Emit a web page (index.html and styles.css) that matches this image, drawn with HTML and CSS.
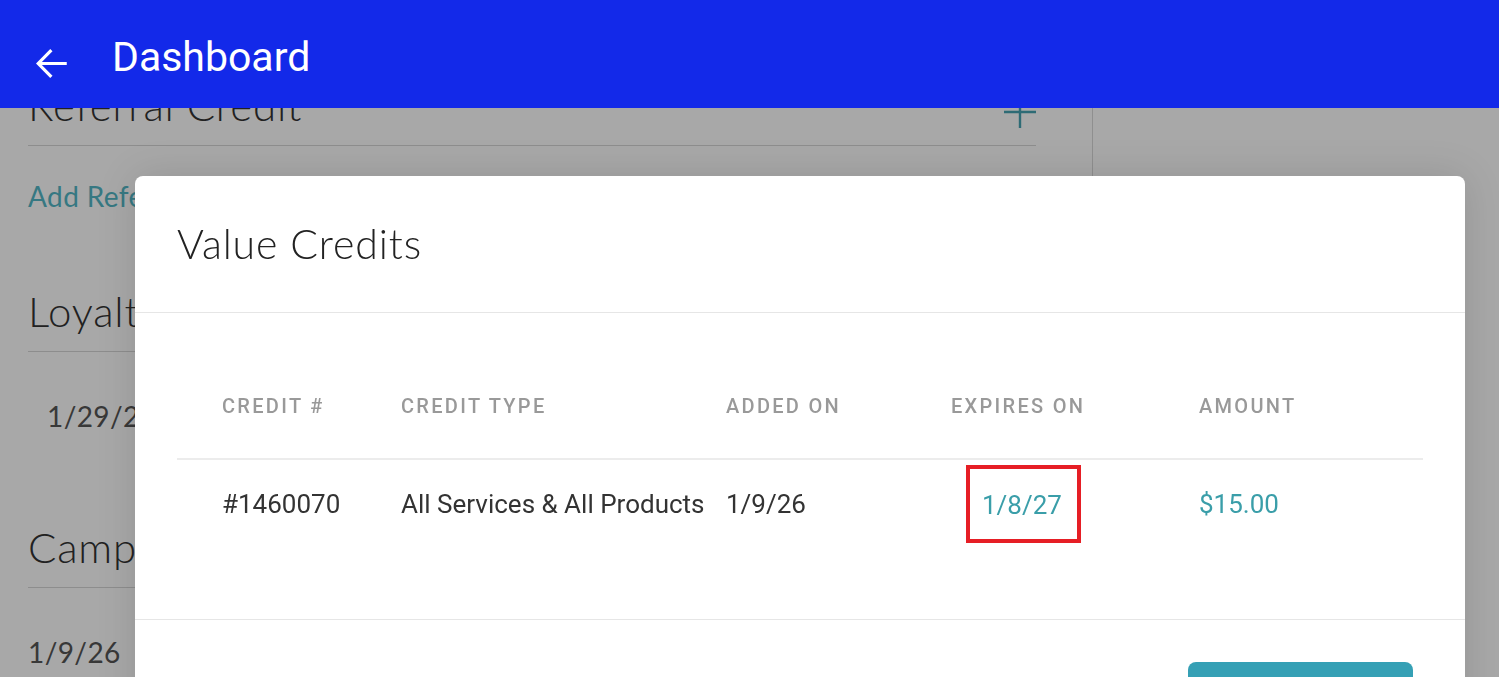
FILE: index.html
```html
<!DOCTYPE html>
<html lang="en">
<head>
    <meta charset="UTF-8">
    <title>Dashboard</title>
    <link rel="stylesheet" href="styles.css">
</head>
<body>
<div class="topbar">
    <svg class="back" width="45" height="45" viewBox="0 0 24 24">
        <path d="M19.6 12H4.6M11.4 4.9L4.4 12l7 7.1" fill="none" stroke="#fff" stroke-width="1.7"/>
    </svg>
    <span class="topbar-title">Dashboard</span>
</div>

<div class="page">
    <div class="main">
        <div class="section-head">
            <h2>Referral Credit</h2>
            <svg class="plus" width="32" height="32" viewBox="0 0 32 32">
                <path d="M0 16H32M16 0V32" stroke="#46a3b2" stroke-width="2.4"/>
            </svg>
        </div>
        <a class="link" href="#">Add Referral</a>

        <div class="section-head">
            <h2>Loyalty Points</h2>
        </div>
        <div class="row-date indent">1/29/26</div>

        <div class="section-head">
            <h2>Campaigns</h2>
        </div>
        <div class="row-date">1/9/26</div>
    </div>
    <div class="side"></div>
</div>

<div class="overlay"></div>

<div class="modal">
    <div class="modal-header">
        <h3>Value Credits</h3>
    </div>
    <div class="modal-body">
        <table class="credits">
            <colgroup>
                <col style="width:179px">
                <col style="width:325px">
                <col style="width:225px">
                <col style="width:248px">
                <col>
            </colgroup>
            <thead>
            <tr>
                <th>Credit #</th>
                <th>Credit Type</th>
                <th>Added On</th>
                <th>Expires On</th>
                <th>Amount</th>
            </tr>
            </thead>
            <tbody>
            <tr>
                <td>#1460070</td>
                <td>All Services &amp; All Products</td>
                <td>1/9/26</td>
                <td><span class="mark">1/8/27</span></td>
                <td class="teal">$15.00</td>
            </tr>
            </tbody>
        </table>
    </div>
    <div class="modal-footer">
        <button class="btn">Close</button>
    </div>
</div>
</body>
</html>
```

FILE: styles.css
```css
body, h2, h3 {
    margin: 0;
    padding: 0;
}

body {
    background: #fff;
    font-family: Lato, "Noto Sans", sans-serif;
    color: #555;
    overflow: hidden;
}

/* top bar */
.topbar {
    position: fixed;
    top: 0;
    left: 0;
    right: 0;
    height: 108px;
    background: #1329e9;
    display: flex;
    align-items: center;
    z-index: 30;
}

.back {
    margin: 18px 0 0 30px;
}

.topbar-title {
    margin-left: 37px;
    font-family: Roboto, sans-serif;
    font-size: 41px;
    color: #fff;
    margin-top: 6px;
}

/* page behind the dialog */
.page {
    display: flex;
    padding-top: 65px;
}

.main {
    width: 1008px;
    margin-left: 28px;
}

.side {
    margin-left: 56px;
    border-left: 1px solid #d9d9d9;
    height: 700px;
}

.section-head {
    display: flex;
    justify-content: space-between;
    align-items: center;
    height: 80px;
    border-bottom: 1px solid #d6d6d6;
}

.section-head h2 {
    font-weight: 300;
    font-size: 42px;
    letter-spacing: 0.8px;
    color: #333;
}

.plus {
    margin-top: 14px;
}

.link {
    display: block;
    height: 125px;
    padding-top: 33px;
    box-sizing: border-box;
    font-size: 28px;
    letter-spacing: 0.4px;
    color: #52b6c6;
    text-decoration: none;
}

.row-date {
    font-size: 28px;
    letter-spacing: 0.4px;
    color: #555;
    height: 155px;
    padding-top: 47px;
    box-sizing: border-box;
}

.row-date.indent {
    padding-left: 19px;
}

.overlay {
    position: fixed;
    top: 0;
    left: 0;
    right: 0;
    bottom: 0;
    background: rgba(0, 0, 0, 0.34);
    z-index: 10;
}

/* dialog */
.modal {
    position: fixed;
    top: 176px;
    left: 135px;
    width: 1330px;
    height: 620px;
    background: #fff;
    border-radius: 8px;
    box-shadow: 0 0 40px rgba(0, 0, 0, 0.12);
    z-index: 20;
}

.modal-header {
    height: 136px;
    padding: 0 42px;
    display: flex;
    align-items: center;
    border-bottom: 1px solid #e6e6e6;
}

.modal-header h3 {
    font-weight: 300;
    font-size: 41px;
    letter-spacing: 0.9px;
    color: #222;
    margin-top: -2px;
}

.modal-body {
    padding: 40px 42px 71px;
}

.credits {
    width: 100%;
    border-collapse: collapse;
    table-layout: fixed;
    font-family: Roboto, sans-serif;
}

.credits th {
    height: 105px;
    padding: 0 0 0 45px;
    text-align: left;
    font-size: 20px;
    font-weight: 500;
    letter-spacing: 2.3px;
    text-transform: uppercase;
    color: #999;
    border-bottom: 2px solid #ececec;
}

.credits td {
    height: 88px;
    padding: 0 0 0 45px;
    font-size: 26px;
    color: #333;
    white-space: nowrap;
}

.credits td.teal {
    color: #3a9ea9;
}

.mark {
    display: inline-block;
    width: 115px;
    height: 78px;
    margin-left: 15px;
    padding-left: 12px;
    box-sizing: border-box;
    border: 4px solid #e61e25;
    line-height: 72px;
    color: #3a9ea9;
    vertical-align: middle;
}

.modal-footer {
    border-top: 1px solid #e6e6e6;
    padding: 42px 52px;
    display: flex;
    justify-content: flex-end;
}

.btn {
    width: 225px;
    height: 60px;
    border: none;
    border-radius: 8px;
    background: #35a0b5;
    color: #fff;
    font-family: Roboto, sans-serif;
    font-size: 22px;
}
```
